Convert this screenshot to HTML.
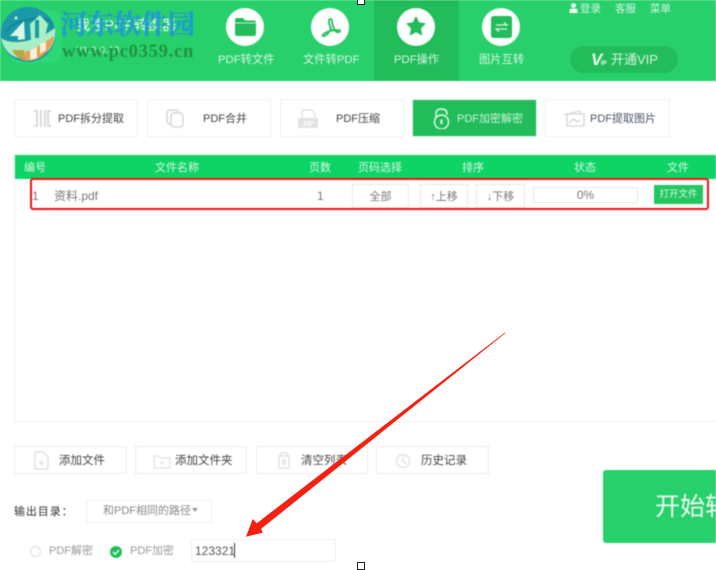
<!DOCTYPE html>
<html><head><meta charset="utf-8">
<style>
*{box-sizing:border-box}
html,body{margin:0;padding:0;background:#fff}
body{width:716px;height:570px;overflow:hidden;position:relative;font-family:"Liberation Sans","Noto Sans CJK SC",sans-serif;color:#555}
.a{position:absolute;white-space:nowrap}
#wrap{position:absolute;left:0;top:0;width:716px;height:570px;filter:blur(.4px)}
.hd{left:0;top:0;width:716px;height:81px;background:#28d06c}
.circ{position:absolute;width:38px;height:38px;border-radius:50%;background:#fff;top:8px}
.tl{font-size:11.3px;line-height:14px;color:#d5f5e1;top:53px;text-align:center}
.b{position:absolute;top:99px;height:38px;border:1.5px solid #f0f0f0;background:#fff;font-size:11px;line-height:14px;color:#444}
.b span{position:absolute;top:12px;white-space:nowrap}
.b svg{position:absolute}
.c{position:absolute;top:446px;height:28px;border:1.5px solid #ececec;background:#fff;font-size:11.5px;line-height:14px;color:#444}
.c span{position:absolute;top:7px;white-space:nowrap}
.c svg{position:absolute;top:4px}
.th{top:161px;font-size:11px;line-height:14px;color:#d9f7e5}
.td{position:absolute;border:1.5px solid #e8e8e8;background:#fff;font-size:11px;color:#777;text-align:center}
</style></head><body>
<div id="wrap">
<div class="a hd"></div>
<div class="a" style="left:374px;top:0;width:85px;height:81px;background:#22bd5a"></div>

<!-- app logo -->
<div class="a" style="left:8px;top:10px;width:54px;height:53px;background:#2bd874;border-radius:12px"></div>
<svg class="a" style="left:0;top:0" width="64" height="64" viewBox="0 0 64 64">
<circle cx="28" cy="34.500" r="27.500" fill="#1a9aa8"/>
<path d="M1 38C12 46 36 42 55 28C56 36 54 44 49 50C38 60 18 63 8 52C4 48 2 43 1 38Z" fill="#a9efc6"/>
<path d="M25 52C36 48 46 42 54 36C53 46 46 56 34 60L26 61Z" fill="#e8a04b"/>
<path d="M12 50L24 50L26 61C20 60 15 56 12 50Z" fill="#b8a548"/>
<path d="M6 32C10 24 28 17 44 19C52 20 54 24 50 28" fill="none" stroke="#157f90" stroke-width="1.5"/>
<path d="M10 36L24 21L25 39L18 40V36Z" fill="#d9f7e6"/>
<path d="M30 24L40 15L48 24L45 36L31 40Z" fill="#a9efc6"/>
<path d="M35 20H39V38H35Z" fill="#1a9aa8"/>
<path d="M30 50L37 47V58L30 60ZM40 44L46 42V50L40 54Z" fill="#f5f0e2"/>
<path d="M16 16L18 18L16 20L14 18Z" fill="#bff3d6"/>
</svg>

<!-- app title under watermark -->
<div class="a" style="left:76px;top:17px;font-size:14px;line-height:16px;color:#f2fcf6;letter-spacing:.3px">我速PDF转换器</div>
<div class="a" style="left:76px;top:45px;font-size:9px;line-height:11px;color:#d5f5e1;letter-spacing:.6px">V1.2.0.13</div>

<!-- watermark -->
<div class="a" style="left:60px;top:9px;font-family:'Liberation Serif','Noto Serif CJK SC',serif;font-size:27px;line-height:32px;font-weight:700;color:#1e9bd0;opacity:.92;-webkit-text-stroke:.5px #1e9bd0">河东软件园</div>
<div class="a" style="left:62px;top:42px;font-family:'Liberation Serif',serif;font-size:18.5px;line-height:20px;font-weight:700;color:#1f9444;letter-spacing:.75px">www.pc0359.cn</div>

<!-- nav tabs -->
<div class="circ" style="left:226px"></div>
<svg class="a" style="left:234px;top:17px" width="23" height="20" viewBox="0 0 23 20"><path d="M1 3.500Q1 1 3 1H9L11 3.500H20Q22 3.500 22 5.500V17Q22 19 20 19H3Q1 19 1 17Z" fill="#22bd5a"/><path d="M1 6H22" stroke="#fff" stroke-width=".8"/></svg>
<div class="a tl" style="left:218px">PDF转文件</div>

<div class="circ" style="left:311px"></div>
<svg class="a" style="left:321px;top:17px" width="20" height="22" viewBox="0 0 20 22" fill="none" stroke="#22bd5a" stroke-width="1.8"><path d="M9 2C7 2 8 8 10 12C8 16 4 20 2 19C0 18 6 13 18 13C20 13 19 16 16 15C13 14 11 7 11 4C11 2 10 2 9 2Z"/></svg>
<div class="a tl" style="left:303px">文件转PDF</div>

<div class="circ" style="left:397px"></div>
<svg class="a" style="left:405px;top:15px" width="22" height="22" viewBox="0 0 22 22"><path d="M11 2L13.800 7.800L20 8.700L15.600 13.300L16.700 19.800L11 16.700L5.300 19.800L6.400 13.300L2 8.700L8.200 7.800Z" fill="#22bd5a" stroke="#22bd5a" stroke-width="1" stroke-linejoin="round"/></svg>
<div class="a tl" style="left:394px">PDF操作</div>

<div class="circ" style="left:482px"></div>
<svg class="a" style="left:491px;top:16px" width="21" height="22" viewBox="0 0 21 22"><rect width="21" height="22" rx="2.500" fill="#22bd5a"/><path d="M5 9H16L13 6.500M16 13H5L8 15.500" fill="none" stroke="#d5f5e1" stroke-width="1.2"/></svg>
<div class="a tl" style="left:479px">图片互转</div>

<!-- top right -->
<svg class="a" style="left:569px;top:3px" width="9" height="10" viewBox="0 0 9 10"><circle cx="4.500" cy="2.600" r="2.400" fill="#fff"/><path d="M.5 10V7.500Q.5 5.600 2.500 5.600H6.500Q8.500 5.600 8.500 7.500V10Z" fill="#fff"/></svg>
<div class="a" style="left:580px;top:1px;font-size:10.5px;color:#d5f5e1">登录</div>
<div class="a" style="left:615px;top:1px;font-size:10.5px;color:#d5f5e1">客服</div>
<div class="a" style="left:650px;top:1px;font-size:10.5px;color:#d5f5e1">菜单</div>
<div class="a" style="left:570px;top:46px;width:108px;height:27px;border-radius:14px;background:#22bd5a"></div>
<div class="a" style="left:591px;top:51px;font-size:17px;font-weight:700;font-style:italic;color:#eefbf3;line-height:18px">V</div>
<div class="a" style="left:601px;top:61px;font-size:6px;font-weight:700;color:#e8f9ef;line-height:7px">IP</div>
<div class="a" style="left:611px;top:52px;font-size:13px;line-height:16px;color:#d5f5e1">开通VIP</div>

<!-- function buttons -->
<div class="b" style="left:14px;width:124px"><svg style="left:18px;top:10px" width="19" height="17" fill="none" stroke="#d8d8d8" stroke-width="1.8"><path d="M1 1H4V16H1M8 0V17M12 0V17M18 1H15V16H18"/></svg><span style="left:43px">PDF拆分提取</span></div>
<div class="b" style="left:147px;width:124px"><svg style="left:18px;top:9px" width="19" height="20" fill="none" stroke="#d8d8d8" stroke-width="1.5"><rect x="1" y="1" width="12" height="14" rx="3"/><rect x="5" y="4" width="12" height="14" rx="3" fill="#fff"/></svg><span style="left:55px">PDF合并</span></div>
<div class="b" style="left:280px;width:124px"><svg style="left:17px;top:9px" width="20" height="20"><path d="M4 1H13L17 5V12H4Z" fill="none" stroke="#e4e4e4" stroke-width="1.4"/><rect x="0" y="9" width="20" height="10" rx="1" fill="#e2e2e2"/><text x="10" y="17" font-size="7" font-weight="700" fill="#fff" text-anchor="middle" font-family="Liberation Sans">ZIP</text></svg><span style="left:55px">PDF压缩</span></div>
<div class="b" style="left:412px;width:125px;background:#22bd5a;border-color:#e3f5ea;color:#c9f2d9"><svg style="left:20px;top:8px" width="17" height="21" fill="none" stroke="#e4f8ec" stroke-width="1.4"><path d="M3 10V6Q3 1 8.500 1Q14 1 14 6V7"/><circle cx="8.500" cy="14" r="7"/><path d="M8.500 11.500V16" stroke-width="2"/></svg><span style="left:44px">PDF加密解密</span></div>
<div class="b" style="left:545px;width:125px"><svg style="left:17px;top:10px" width="24" height="18" fill="none" stroke="#d8d8d8" stroke-width="1.4"><path d="M1 5L17 1L18 4"/><rect x="4" y="4" width="17" height="12"/><path d="M6 13L11 9L14 12L17 10"/></svg><span style="left:44px;color:#4a5568">PDF提取图片</span></div>

<!-- table -->
<div class="a" style="left:14px;top:155px;width:702px;height:267px;border:1px solid #eee;border-right:0"></div>
<div class="a" style="left:15px;top:155px;width:701px;height:24px;background:#0ed466"></div>
<div class="a th" style="left:24px">编号</div>
<div class="a th" style="left:155px">文件名称</div>
<div class="a th" style="left:309px">页数</div>
<div class="a th" style="left:358px">页码选择</div>
<div class="a th" style="left:462px">排序</div>
<div class="a th" style="left:574px">状态</div>
<div class="a th" style="left:667px">文件</div>

<div class="a" style="left:32px;top:189px;font-size:12px;line-height:14px;color:#777">1</div>
<div class="a" style="left:54px;top:189px;font-size:12px;line-height:14px;color:#777">资料.pdf</div>
<div class="a" style="left:317px;top:189px;font-size:12px;line-height:14px;color:#777">1</div>
<div class="td" style="left:352px;top:184px;width:57px;height:24px;line-height:24px">全部</div>
<div class="td" style="left:420px;top:184px;width:48px;height:24px;line-height:24px">↑上移</div>
<div class="td" style="left:476px;top:184px;width:49px;height:24px;line-height:24px">↓下移</div>
<div class="td" style="left:533px;top:187px;width:105px;height:16px;line-height:14px;font-size:12px">0%</div>
<div class="a" style="left:654px;top:185px;width:49px;height:19px;background:#22c85f;color:#d9f7e5;font-size:9.5px;line-height:19px;text-align:center">打开文件</div>
<div class="a" style="left:30px;top:178px;width:679px;height:32px;border:2.500px solid #f31010;border-radius:3px"></div>

<!-- bottom buttons -->
<div class="c" style="left:14px;width:113px"><svg style="left:18px" width="16" height="19" fill="none" stroke="#ddd" stroke-width="1.2"><path d="M2 1H10L15 6V18H2ZM6 12H11M8.500 9.500V14.500"/></svg><span style="left:44px">添加文件</span></div>
<div class="c" style="left:135px;width:112px"><svg style="left:17px" width="18" height="19" fill="none" stroke="#e2e2e2" stroke-width="1.2"><path d="M1 5H6L8 7H17V17H1ZM7 12H11M9 10V14"/></svg><span style="left:39px">添加文件夹</span></div>
<div class="c" style="left:256px;width:112px"><svg style="left:20px" width="14" height="19" fill="none" stroke="#e2e2e2" stroke-width="1.4"><path d="M2 5H12V17H2ZM4 5V2H10V5M6 9H8V13H6Z"/></svg><span style="left:44px">清空列表</span></div>
<div class="c" style="left:376px;width:113px"><svg style="left:18px" width="16" height="19" fill="none" stroke="#e2e2e2" stroke-width="1.4"><circle cx="8" cy="10" r="6.500"/><path d="M8 5V10L11 13"/></svg><span style="left:44px">历史记录</span></div>

<!-- output -->
<div class="a" style="left:14px;top:505px;font-size:11px;line-height:14px;color:#333;letter-spacing:.9px">输出目录：</div>
<div class="a" style="left:86px;top:500px;width:126px;height:23px;border:1.5px solid #eee;font-size:11px;line-height:21px;color:#888;padding-left:16px">和PDF相同的路径<span style="display:inline-block;border:3.500px solid transparent;border-top:4px solid #999;border-bottom:0;vertical-align:2px;margin-left:1px"></span></div>

<div class="a" style="left:30px;top:546px;width:11px;height:11px;border:1px solid #ddd;border-radius:50%"></div>
<div class="a" style="left:49px;top:544px;font-size:11px;line-height:14px;color:#999">PDF解密</div>
<svg class="a" style="left:110px;top:546px" width="12" height="12"><circle cx="6" cy="6" r="6" fill="#22bd5a"/><path d="M3 6L5.300 8.300L9 4" fill="none" stroke="#fff" stroke-width="1.3"/></svg>
<div class="a" style="left:130px;top:544px;font-size:11px;line-height:14px;color:#999">PDF加密</div>
<div class="a" style="left:191px;top:539px;width:145px;height:23px;border:1.5px solid #f0f0f0;background:#fff"></div>
<div class="a" style="left:195px;top:544px;font-size:12px;line-height:14px;color:#555">123321</div>
<div class="a" style="left:234px;top:543px;width:1px;height:15px;background:#333"></div>

<!-- start -->
<div class="a" style="left:603px;top:470px;width:113px;height:73px;background:#28d06c;border-radius:3px 0 0 3px;overflow:hidden"><span style="position:absolute;left:52px;top:21px;font-size:25px;line-height:32px;color:#eefbf3;white-space:nowrap">开始转换</span></div>

<div class="a" style="left:15px;top:421px;width:701px;height:1px;background:#f0f0f0"></div>
</div>

<!-- annotation arrow -->
<svg class="a" style="left:0;top:0" width="716" height="570"><path d="M505.500 333L505 332.500L256.800 523.200L252.700 519L246 536.700L262.700 532.700L261.200 528.800Z" fill="#f52010"/></svg>

<!-- selection handles -->
<div class="a" style="left:357px;top:-3px;width:8px;height:8px;border:1.5px solid #222;background:#fff"></div>
<div class="a" style="left:357px;top:562px;width:8px;height:8px;border:1.5px solid #222;background:#fff"></div>
</body></html>
